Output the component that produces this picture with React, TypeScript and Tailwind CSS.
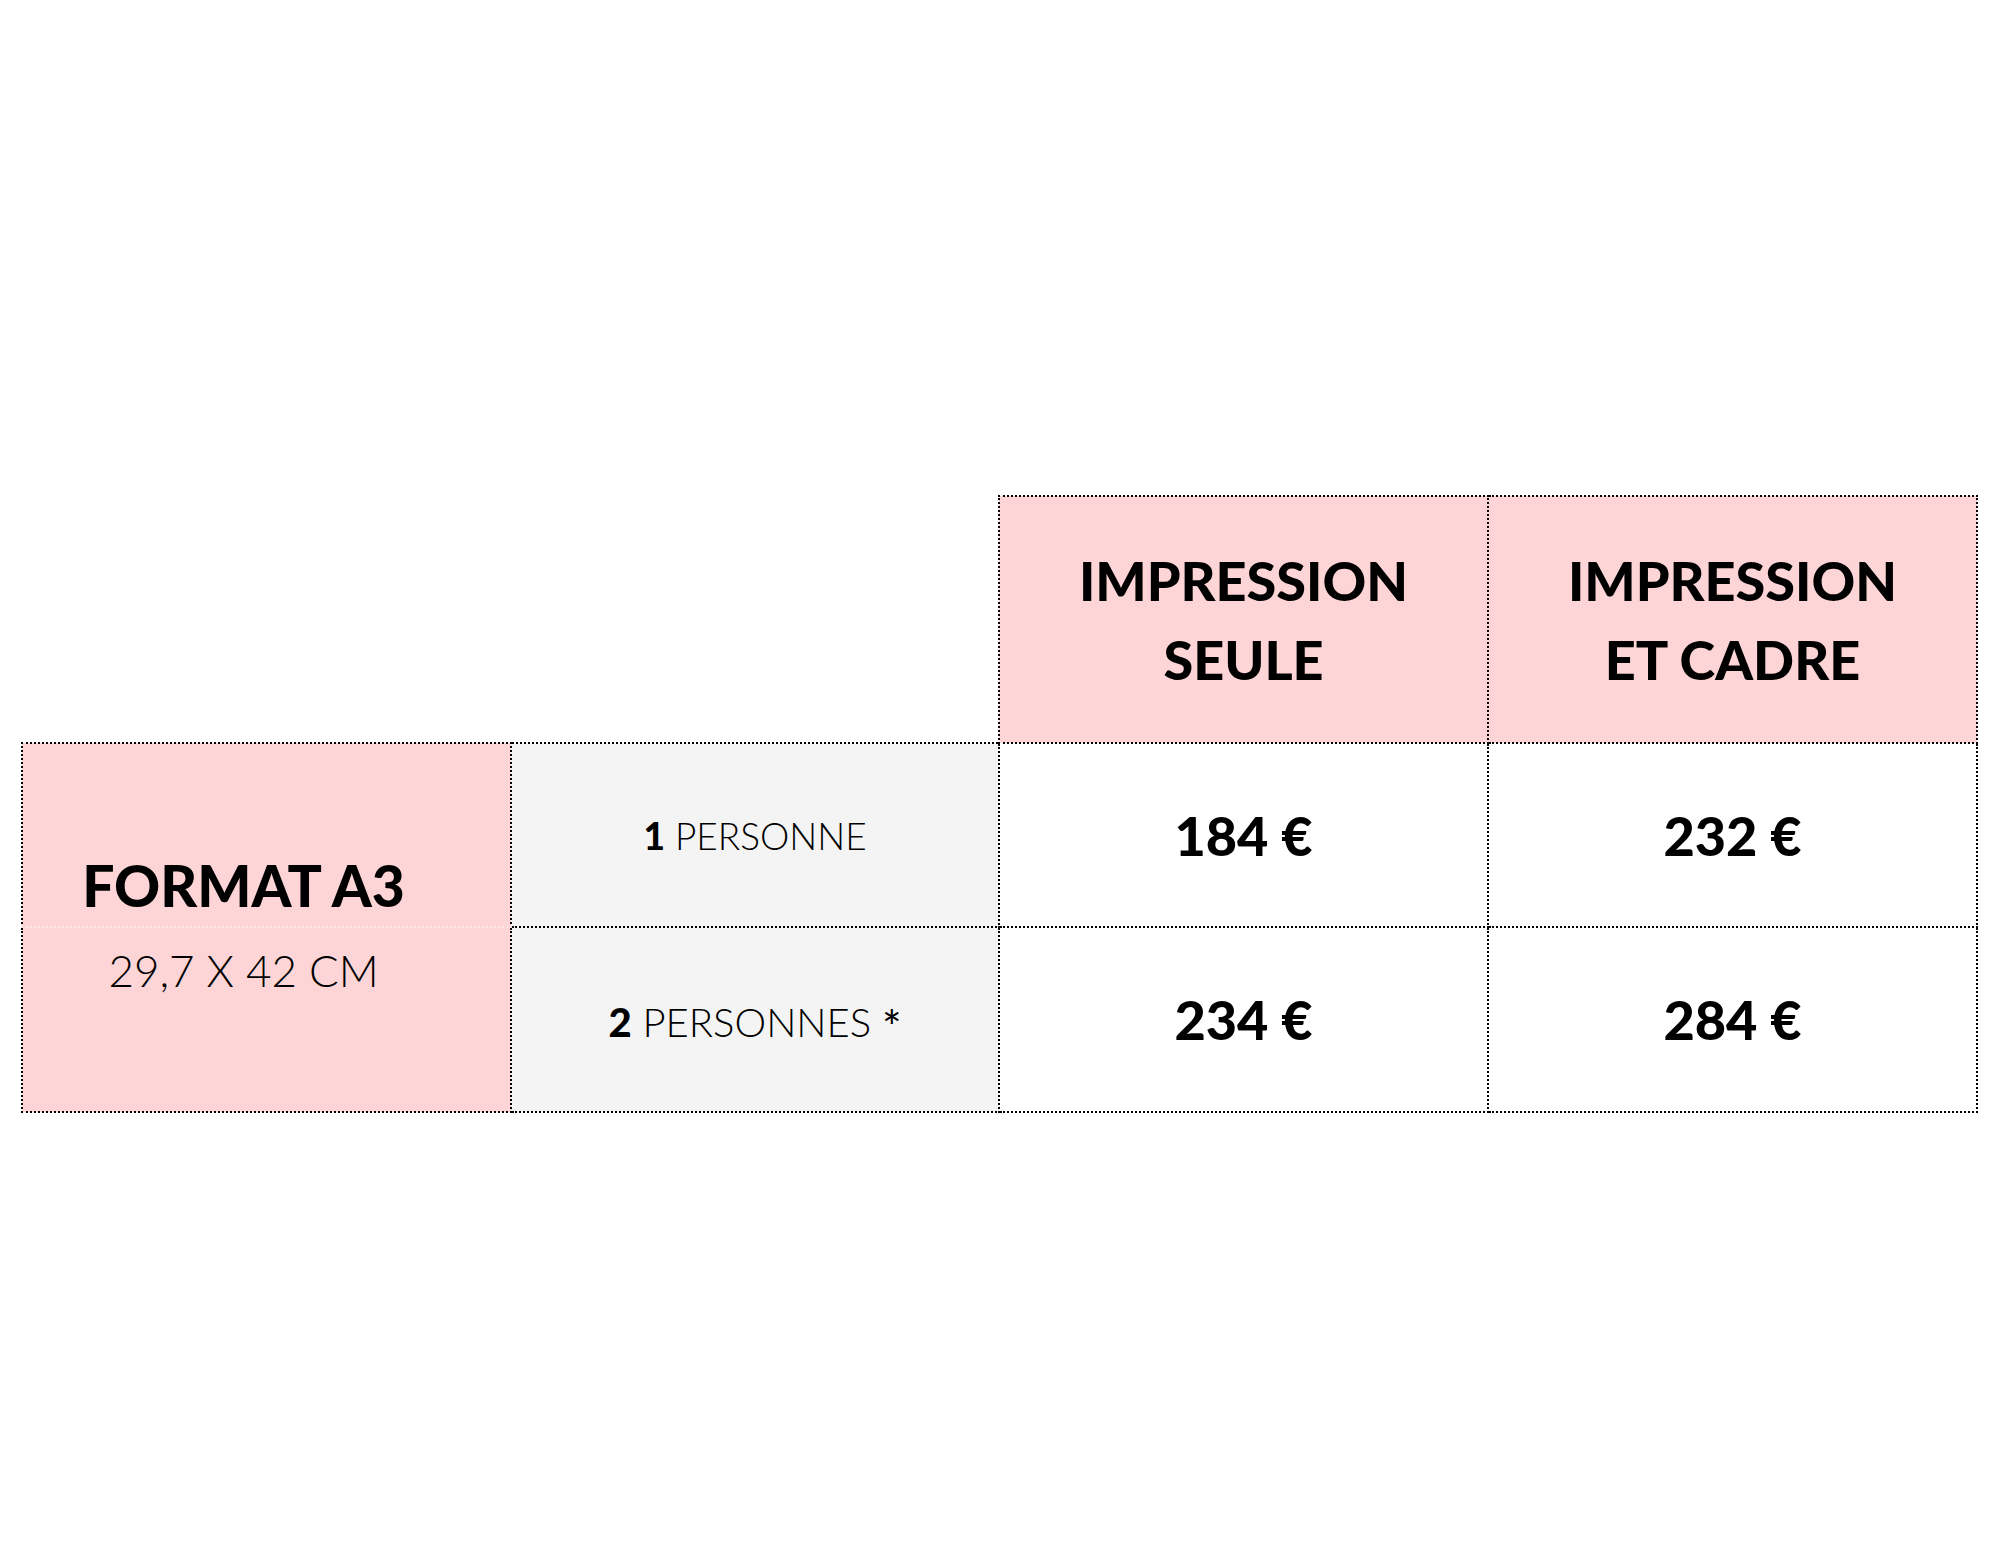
export default function App() {
  const cell = "border-2 border-dotted border-black text-center align-middle";
  const head = "font-['Lato',sans-serif] font-black text-[54px] leading-[79px] text-black";
  const price = "font-['Lato',sans-serif] font-black text-[54px] leading-none text-black";
  const label = "font-['Lato',sans-serif] font-light text-black";

  return (
    <div className="w-[2000px] h-[1545px] bg-white pt-[495px] pl-[21px]">
      <table className="border-collapse table-fixed w-[1957px]">
        <colgroup>
          <col className="w-[489px]" />
          <col className="w-[488px]" />
          <col className="w-[489px]" />
          <col className="w-[489px]" />
        </colgroup>
        <tbody>
          <tr className="h-[247px]">
            <td />
            <td />
            <td className={`${cell} bg-[#fdd5d6]`}>
              <div className={head}>
                IMPRESSION
                <br />
                SEULE
              </div>
            </td>
            <td className={`${cell} bg-[#fdd5d6]`}>
              <div className={head}>
                IMPRESSION
                <br />
                ET CADRE
              </div>
            </td>
          </tr>
          <tr className="h-[184px]">
            <td className="border-2 border-dotted border-black border-b-[#fbe6e6] bg-[#fdd5d6] align-bottom pr-[46px] pb-[12px] text-center">
              <div className="font-['Lato',sans-serif] font-black text-[57px] leading-none text-black">FORMAT A3</div>
            </td>
            <td className={`${cell} bg-[#f4f4f4]`}>
              <div className={`${label} text-[37px] pt-[2px]`}>
                <span className="font-black">1</span> PERSONNE
              </div>
            </td>
            <td className={cell}>
              <div className={`${price} pt-[2px]`}>184 €</div>
            </td>
            <td className={cell}>
              <div className={`${price} pt-[2px]`}>232 €</div>
            </td>
          </tr>
          <tr className="h-[185px]">
            <td className="border-2 border-dotted border-black border-t-[#fbe6e6] bg-[#fdd5d6] align-top pr-[46px] pt-[20px] text-center">
              <div className="font-['Lato',sans-serif] font-light text-[44px] leading-none text-black">29,7 X 42 CM</div>
            </td>
            <td className={`${cell} bg-[#f4f4f4]`}>
              <div className={`${label} text-[40px] leading-none`}>
                <span className="font-black">2</span> PERSONNES{" "}
                <span className="relative top-[7px] text-[46px] font-normal">*</span>
              </div>
            </td>
            <td className={cell}>
              <div className={price}>234 €</div>
            </td>
            <td className={cell}>
              <div className={price}>284 €</div>
            </td>
          </tr>
        </tbody>
      </table>
    </div>
  );
}
